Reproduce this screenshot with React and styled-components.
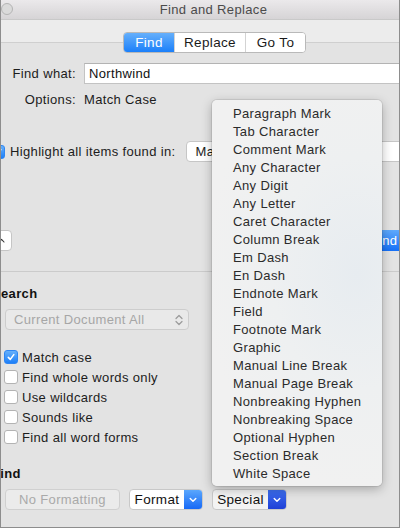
import React from "react";
import styled, { createGlobalStyle } from "styled-components";

const Global = createGlobalStyle`
  html, body { margin: 0; padding: 0; background: #e3e3e3; }
  body {
    font-family: "Liberation Sans", Arial, Helvetica, sans-serif;
    font-size: 13px;
    letter-spacing: 0.35px;
    color: #1c1c1c;
  }
  * { box-sizing: border-box; }
`;

const Window = styled.div`
  position: relative;
  width: 400px;
  height: 528px;
  border-left: 1px solid #8d8d8d;
  border-right: 1px solid #8d8d8d;
  border-bottom: 1px solid #8d8d8d;
  background: #e3e3e3;
  overflow: hidden;
  display: flex;
  flex-direction: column;
`;

const TitleBar = styled.div`
  height: 20px;
  flex: none;
  display: flex;
  align-items: flex-start;
  background: linear-gradient(#ebe9eb, #d6d4d6);
  border-bottom: 1px solid #c9c9c9;
`;

const Light = styled.span`
  width: 12px;
  height: 12px;
  margin-top: 3px;
  border-radius: 50%;
  border: 1px solid #b4b4b4;
  background: #dadada;
  flex: none;
`;

const Title = styled.div`
  flex: 1;
  text-align: center;
  padding-left: 15px;
  line-height: 19px;
  color: #4b4b4b;
`;

const Toolbar = styled.div`
  height: 22px;
  flex: none;
  background: #ececec;
  padding: 12px 0 0 122px;
`;

const Segmented = styled.div`
  position: relative;
  z-index: 2;
  display: inline-flex;
  height: 21px;
  border: 1px solid #b9b9b9;
  border-radius: 4px;
  overflow: hidden;
  background: #fff;
`;

const Segment = styled.div`
  width: ${(p) => p.$w}px;
  line-height: 19px;
  text-align: center;
  font-size: 13.5px;
  color: ${(p) => (p.$active ? "#fff" : "#1a1a1a")};
  background: ${(p) => (p.$active ? "linear-gradient(#65affb, #1b80fa)" : "#fff")};
  & + & { border-left: 1px solid #d3d3d3; }
`;

const Panel = styled.div`
  flex: 1;
  border-top: 1px solid #cfcfcf;
  background: #e3e3e3;
  padding-top: 20px;
  display: flex;
  flex-direction: column;
`;

const FieldRow = styled.div`
  display: grid;
  grid-template-columns: 75px 1fr;
  column-gap: 8px;
  align-items: center;
  margin-top: ${(p) => p.$mt || 0}px;
  height: ${(p) => p.$h || 16}px;
`;

const FieldLabel = styled.div`
  text-align: right;
  white-space: nowrap;
`;

const TextInput = styled.input`
  width: 340px;
  height: 21px;
  border: 1px solid #c3c3c3;
  border-top-color: #b3b3b3;
  background: #fff;
  padding: 0 4px;
  font: inherit;
  letter-spacing: inherit;
  color: #111;
  outline: none;
`;

const HighlightRow = styled.div`
  margin-top: 34px;
  margin-left: -10px;
  height: 21px;
  display: flex;
  align-items: center;
  white-space: nowrap;
`;

const CheckBox = styled.span`
  width: 14px;
  height: 14px;
  flex: none;
  border-radius: 3px;
  display: flex;
  align-items: center;
  justify-content: center;
  border: 1px solid ${(p) => (p.$checked ? "#2f86f2" : "#b3b3b3")};
  background: ${(p) => (p.$checked ? "linear-gradient(#66b0fb, #1d7ff8)" : "#fff")};
  margin-right: ${(p) => p.$gap}px;
`;

const PopUp = styled.div`
  margin-left: 10px;
  width: 260px;
  height: 21px;
  flex: none;
  background: #fff;
  border: 1px solid #c6c6c6;
  border-radius: 4px;
  padding-left: 9px;
  line-height: 19px;
`;

const ActionRow = styled.div`
  margin-top: 68px;
  height: 21px;
  display: flex;
  align-items: center;
  justify-content: space-between;
`;

const SmallButton = styled.div`
  margin-left: -10px;
  width: 21px;
  height: 21px;
  background: #fff;
  border: 1px solid #c5c5c5;
  border-radius: 4px;
  display: flex;
  align-items: center;
  justify-content: center;
`;

const DefaultButton = styled.div`
  margin-right: -18px;
  width: 66px;
  height: 21px;
  border-radius: 4px;
  background: linear-gradient(#5ea9fc, #1670f7);
  color: #fff;
  text-align: center;
  line-height: 21px;
`;

const Divider = styled.div`
  margin-top: 20px;
  height: 1px;
  background: #cbcbcb;
`;

const SectionTitle = styled.div`
  margin-top: ${(p) => p.$mt}px;
  margin-left: -9px;
  font-weight: bold;
  line-height: 16px;
  color: #111;
`;

const Select = styled.div`
  margin: 7px 0 0 4px;
  width: 184px;
  height: 21px;
  border: 1px solid #cdcdcd;
  border-radius: 4px;
  background: #e9e9e9;
  color: #a6a6a6;
  display: flex;
  align-items: center;
  justify-content: space-between;
  padding: 0 5px 0 8px;
`;

const CheckList = styled.div`
  margin-top: 17px;
  display: flex;
  flex-direction: column;
`;

const CheckRow = styled.div`
  height: 20px;
  display: flex;
  align-items: center;
  padding-left: 3px;
`;

const ButtonRow = styled.div`
  margin-top: 7px;
  padding-left: 4px;
  display: flex;
  gap: 9px;
  height: 21px;
`;

const PlainButton = styled.div`
  width: 115px;
  height: 21px;
  border: 1px solid #d0d0d0;
  border-radius: 4px;
  background: #ebebeb;
  color: #a9a9a9;
  text-align: center;
  line-height: 19px;
`;

const SplitButton = styled.div`
  width: ${(p) => p.$w}px;
  height: 21px;
  display: flex;
  border: 1px solid #c8c8c8;
  border-radius: 4px;
  overflow: hidden;
  background: ${(p) => (p.$pressed ? "#f3f3f3" : "#fff")};
`;

const SplitLabel = styled.div`
  flex: 1;
  text-align: center;
  line-height: 19px;
  color: #111;
  font-size: 13.5px;
`;

const SplitArrow = styled.div`
  width: 18px;
  display: flex;
  align-items: center;
  justify-content: center;
  background: ${(p) =>
    p.$dark ? "linear-gradient(#3d6ff0, #1e3fd6)" : "linear-gradient(#5aa7fd, #1769f6)"};
`;

const Menu = styled.div`
  position: absolute;
  left: 211px;
  top: 100px;
  width: 170px;
  height: 386px;
  padding: 5px 0 3px;
  border-radius: 5px;
  background: radial-gradient(ellipse 90% 55% at 85% 45%, #e7ecf0 0%, #eef0f1 55%, #f1f1f1 100%);
  box-shadow: 0 3px 11px rgba(0, 0, 0, 0.28), 0 0 0 1px rgba(0, 0, 0, 0.08);
  z-index: 10;
`;

const MenuItem = styled.div`
  height: 18px;
  line-height: 18px;
  padding-left: 21px;
  color: #2b2b2b;
  white-space: nowrap;
`;

const Check = () => (
  <svg width="10" height="10" viewBox="0 0 10 10">
    <path d="M2.3 5.4 L4.3 7.4 L7.8 2.6" fill="none" stroke="#fff" strokeWidth="1.6" strokeLinecap="round" strokeLinejoin="round" />
  </svg>
);

const DownChevron = () => (
  <svg width="8" height="6" viewBox="0 0 8 6">
    <path d="M1.2 1.5 L4 4.3 L6.8 1.5" fill="none" stroke="#fff" strokeWidth="1.4" strokeLinecap="round" strokeLinejoin="round" />
  </svg>
);

const UpDown = () => (
  <svg width="8" height="12" viewBox="0 0 8 12">
    <path d="M1 4.5 L4 1.5 L7 4.5 M1 7.5 L4 10.5 L7 7.5" fill="none" stroke="#9a9a9a" strokeWidth="1.2" strokeLinecap="round" strokeLinejoin="round" />
  </svg>
);

const UpChevron = () => (
  <svg width="7" height="5" viewBox="0 0 7 5">
    <path d="M1 4 L3.5 1.3 L6 4" fill="none" stroke="#333" strokeWidth="1.1" strokeLinecap="round" strokeLinejoin="round" />
  </svg>
);

const special = [
  "Paragraph Mark",
  "Tab Character",
  "Comment Mark",
  "Any Character",
  "Any Digit",
  "Any Letter",
  "Caret Character",
  "Column Break",
  "Em Dash",
  "En Dash",
  "Endnote Mark",
  "Field",
  "Footnote Mark",
  "Graphic",
  "Manual Line Break",
  "Manual Page Break",
  "Nonbreaking Hyphen",
  "Nonbreaking Space",
  "Optional Hyphen",
  "Section Break",
  "White Space",
];

const options = [
  { label: "Match case", checked: true },
  { label: "Find whole words only" },
  { label: "Use wildcards" },
  { label: "Sounds like" },
  { label: "Find all word forms" },
];

export default function App() {
  return (
    <>
      <Global />
      <Window>
        <TitleBar>
          <Light />
          <Title>Find and Replace</Title>
        </TitleBar>
        <Toolbar>
          <Segmented>
            <Segment $w={50} $active>Find</Segment>
            <Segment $w={71}>Replace</Segment>
            <Segment $w={60}>Go To</Segment>
          </Segmented>
        </Toolbar>
        <Panel>
          <FieldRow $h={21}>
            <FieldLabel>Find what:</FieldLabel>
            <TextInput readOnly value="Northwind" />
          </FieldRow>
          <FieldRow $mt={7}>
            <FieldLabel>Options:</FieldLabel>
            <div>Match Case</div>
          </FieldRow>
          <HighlightRow>
            <CheckBox $checked $gap={5}>
              <Check />
            </CheckBox>
            <span>Highlight all items found in:</span>
            <PopUp>Main Document</PopUp>
          </HighlightRow>
          <ActionRow>
            <SmallButton>
              <UpChevron />
            </SmallButton>
            <DefaultButton>Find</DefaultButton>
          </ActionRow>
          <Divider />
          <SectionTitle $mt={14}>Search</SectionTitle>
          <Select>
            <span>Current Document All</span>
            <UpDown />
          </Select>
          <CheckList>
            {options.map((o) => (
              <CheckRow key={o.label}>
                <CheckBox $checked={o.checked} $gap={4}>
                  {o.checked && <Check />}
                </CheckBox>
                <span>{o.label}</span>
              </CheckRow>
            ))}
          </CheckList>
          <SectionTitle $mt={19}>Find</SectionTitle>
          <ButtonRow>
            <PlainButton>No Formatting</PlainButton>
            <SplitButton $w={74}>
              <SplitLabel>Format</SplitLabel>
              <SplitArrow>
                <DownChevron />
              </SplitArrow>
            </SplitButton>
            <SplitButton $w={75} $pressed>
              <SplitLabel>Special</SplitLabel>
              <SplitArrow $dark>
                <DownChevron />
              </SplitArrow>
            </SplitButton>
          </ButtonRow>
        </Panel>
        <Menu>
          {special.map((s) => (
            <MenuItem key={s}>{s}</MenuItem>
          ))}
        </Menu>
      </Window>
    </>
  );
}
